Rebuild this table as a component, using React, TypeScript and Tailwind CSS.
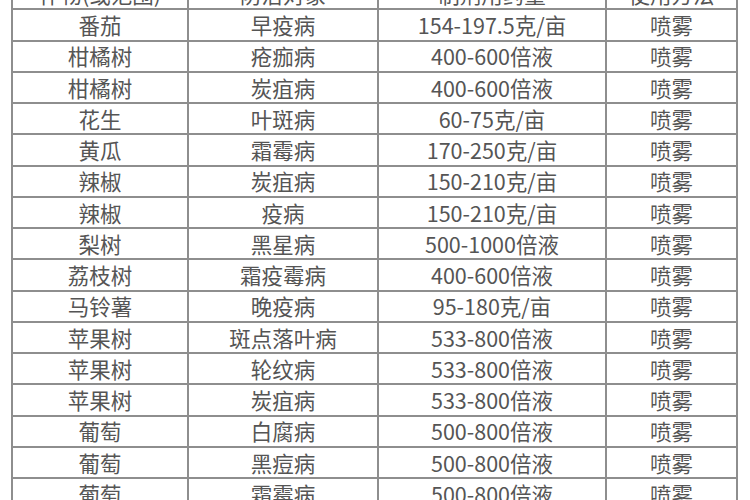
const header = ['作物(或范围)', '防治对象', '制剂用药量', '使用方法'];

const rows = [
  ['番茄', '早疫病', '154-197.5克/亩'],
  ['柑橘树', '疮痂病', '400-600倍液'],
  ['柑橘树', '炭疽病', '400-600倍液'],
  ['花生', '叶斑病', '60-75克/亩'],
  ['黄瓜', '霜霉病', '170-250克/亩'],
  ['辣椒', '炭疽病', '150-210克/亩'],
  ['辣椒', '疫病', '150-210克/亩'],
  ['梨树', '黑星病', '500-1000倍液'],
  ['荔枝树', '霜疫霉病', '400-600倍液'],
  ['马铃薯', '晚疫病', '95-180克/亩'],
  ['苹果树', '斑点落叶病', '533-800倍液'],
  ['苹果树', '轮纹病', '533-800倍液'],
  ['苹果树', '炭疽病', '533-800倍液'],
  ['葡萄', '白腐病', '500-800倍液'],
  ['葡萄', '黑痘病', '500-800倍液'],
  ['葡萄', '霜霉病', '500-800倍液'],
];

const cell = 'border-2 border-[#8e8e8e] h-[31.25px] p-0 text-center align-middle leading-none';

export default function App() {
  return (
    <div
      className="w-[750px] h-[500px] overflow-hidden bg-white text-[#555555] text-[21.5px]"
      style={{ fontFamily: '"Noto Sans CJK SC", "Noto Sans", sans-serif' }}
    >
      <table className="table-fixed border-collapse ml-[11px] -mt-[23px] w-[725px]">
        <colgroup>
          <col className="w-[176px]" />
          <col className="w-[190px]" />
          <col className="w-[228px]" />
          <col className="w-[131px]" />
        </colgroup>
        <thead>
          <tr>
            {header.map((h) => (
              <th key={h} className={`${cell} font-normal`}>
                {h}
              </th>
            ))}
          </tr>
        </thead>
        <tbody>
          {rows.map((r, i) => (
            <tr key={i}>
              <td className={cell}>{r[0]}</td>
              <td className={cell}>{r[1]}</td>
              <td className={cell}>{r[2]}</td>
              <td className={cell}>喷雾</td>
            </tr>
          ))}
        </tbody>
      </table>
    </div>
  );
}
